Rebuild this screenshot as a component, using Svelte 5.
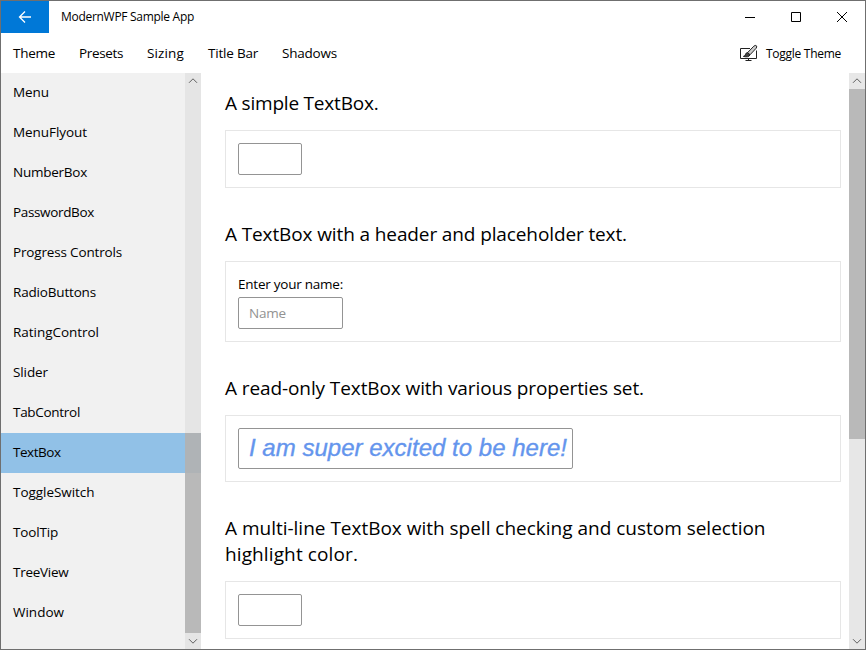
<script>
  const menus = [
    { label: 'Theme', width: 42 },
    { label: 'Presets', width: 44 },
    { label: 'Sizing', width: 37 },
    { label: 'Title Bar', width: 50 },
    { label: 'Shadows', width: 55 }
  ];
  const pages = [
    { label: 'Menu', width: 36 },
    { label: 'MenuFlyout', width: 74 },
    { label: 'NumberBox', width: 74 },
    { label: 'PasswordBox', width: 81 },
    { label: 'Progress Controls', width: 109 },
    { label: 'RadioButtons', width: 83 },
    { label: 'RatingControl', width: 86 },
    { label: 'Slider', width: 35 },
    { label: 'TabControl', width: 67 },
    { label: 'TextBox', width: 47.5 },
    { label: 'ToggleSwitch', width: 81.5 },
    { label: 'ToolTip', width: 45 },
    { label: 'TreeView', width: 55.5 },
    { label: 'Window', width: 51 }
  ];
  let selected = $state('TextBox');

  function fit(node, width) {
    const natural = node.getBoundingClientRect().width;
    node.style.letterSpacing = `${(width - natural) / node.textContent.length}px`;
  }
</script>

{#snippet chevron(down)}
  <svg class="chevron" width="16" height="16" viewBox="0 0 16 16">
    <path d={down ? 'M4 6.2 8 10.2 12 6.2' : 'M4 9.8 8 5.8 12 9.8'} />
  </svg>
{/snippet}

<div class="window">
  <header class="titlebar">
    <button class="back" aria-label="Back">
      <svg width="14" height="14" viewBox="0 0 14 14"><path d="M13 7H1.5M7 1.5 1.5 7 7 12.5" /></svg>
    </button>
    <span class="title"><span use:fit={133}>ModernWPF Sample App</span></span>
    <div class="captions">
      <button aria-label="Minimize"><svg width="12" height="12" viewBox="0 0 12 12"><path d="M1 6.5H11" /></svg></button>
      <button aria-label="Maximize"><svg width="12" height="12" viewBox="0 0 12 12"><path d="M1.5 1.5H10.5V10.5H1.5Z" /></svg></button>
      <button aria-label="Close"><svg width="12" height="12" viewBox="0 0 12 12"><path d="M1 1 11 11M11 1 1 11" /></svg></button>
    </div>
  </header>

  <nav class="menubar">
    {#each menus as menu}
      <span class="label" use:fit={menu.width}>{menu.label}</span>
    {/each}
    <button class="toggle">
      <svg width="18" height="16" viewBox="0 0 18 16">
        <path d="M10 3.5H.5V13.5H16.5V5.5M8.5 13.5V15.5M5.5 15.5H11.5" />
        <path class="handle" d="M7.6 7.6 13.8 1.2Q15.4-.2 16.4.8Q17.3 1.8 16 3.4L10 9.8Z" />
        <path class="bristle" d="M7.6 7.6Q5.6 7.8 5.3 9.8Q5 11.2 3.4 11.4Q8.8 12.8 10 9.8Z" />
      </svg>
      <span class="small" use:fit={75}>Toggle Theme</span>
    </button>
  </nav>

  <div class="body">
    <aside>
      <ul>
        {#each pages as page}
          <li>
            <button class:selected={page.label === selected} onclick={() => (selected = page.label)}>
              <span use:fit={page.width}>{page.label}</span>
            </button>
          </li>
        {/each}
      </ul>
      <div class="scrollbar side">
        {@render chevron(false)}
        <div class="track"><div class="thumb low"><div class="tint"></div></div></div>
        {@render chevron(true)}
      </div>
    </aside>

    <main>
      <section>
        <h2><span use:fit={153.5}>A simple TextBox.</span></h2>
        <div class="card"><div class="box"></div></div>
      </section>
      <section>
        <h2><span use:fit={402}>A TextBox with a header and placeholder text.</span></h2>
        <div class="card">
          <label for="name"><span use:fit={105}>Enter your name:</span></label>
          <div class="box name" id="name"><span use:fit={37}>Name</span></div>
        </div>
      </section>
      <section>
        <h2><span use:fit={419}>A read-only TextBox with various properties set.</span></h2>
        <div class="card"><div class="box excited"><span use:fit={318}>I am super excited to be here!</span></div></div>
      </section>
      <section>
        <h2>
          <span use:fit={540.5}>A multi-line TextBox with spell checking and custom selection</span><br />
          <span use:fit={133}>highlight color.</span>
        </h2>
        <div class="card"><div class="box"></div></div>
      </section>
    </main>
    <div class="scrollbar">
      {@render chevron(false)}
      <div class="track"><div class="thumb high"></div></div>
      {@render chevron(true)}
    </div>
  </div>
</div>

<style>
  :global(body) { margin: 0; overflow: hidden; }
  .window {
    box-sizing: border-box; width: 866px; height: 650px; border: 1px solid #6f6f6f;
    background: #fff; color: #000; display: flex; flex-direction: column; overflow: hidden;
    font: 14px/20px "Open Sans", "Noto Sans", sans-serif; white-space: nowrap;
  }
  button { font: inherit; color: inherit; border: 0; margin: 0; padding: 0; background: none; }
  svg { display: block; fill: none; stroke: #000; flex: none; }
  .titlebar { height: 32px; display: flex; align-items: center; flex: none; }
  .back { width: 48px; height: 32px; background: #0078d7; display: grid; place-items: center; }
  .back svg { stroke: #fff; stroke-width: 1.3; }
  .title { margin-left: 12px; font-size: 12px; }
  .captions { margin-left: auto; display: flex; }
  .captions button { width: 46px; height: 32px; display: grid; place-items: center; }
  .menubar { height: 40px; flex: none; display: flex; align-items: center; gap: 24px; padding: 0 24px 0 12px; font-size: 13.5px; }
  .toggle { margin-left: auto; display: flex; align-items: center; gap: 8px; }
  .toggle svg { stroke: #222; overflow: visible; }
  .small { font-size: 12px; line-height: 20px; padding-top: 1px; }
  .toggle .handle { fill: #ccc; }
  .toggle .bristle { fill: #444; }
  .body { flex: 1; min-height: 0; display: flex; }
  aside { width: 200px; display: flex; background: #f1f1f1; }
  ul { flex: 1; list-style: none; margin: 0; padding: 0; }
  li button { width: 100%; height: 40px; display: flex; align-items: center; padding: 0 0 2px 12px; font-size: 13.5px; }
  li .selected { background: #91c1e7; }
  .scrollbar { width: 16px; flex: none; display: flex; flex-direction: column; background: #e7e7e7; }
  .side { background: #e5e5e5; }
  .chevron { stroke: #606060; stroke-width: 1; }
  .track { flex: 1; display: flex; flex-direction: column; }
  .thumb { background: #b9b9b9; }
  .high { height: 350px; }
  .low { height: 200px; margin-top: auto; }
  .tint { height: 40px; background: #afb3b6; }
  main { flex: 1; min-width: 0; padding: 17px 8px 0 24px; overflow: hidden; }
  section { margin-bottom: 33px; }
  h2 { margin: 0 0 14px; font-size: 19px; line-height: 26px; font-weight: 400; }
  .card { border: 1px solid #e6e6e6; padding: 12px; }
  .box { box-sizing: border-box; width: 64px; height: 32px; border: 1px solid #949494; border-radius: 2px; }
  label { display: block; height: 19px; line-height: 21px; margin-bottom: 4px; font-size: 13.5px; }
  .name { width: 105px; padding-left: 10px; line-height: 30px; color: #929292; font-size: 13.5px; }
  .excited {
    width: 335px; height: 41px; padding-left: 10px; color: #6495ed;
    font: italic 24px/38px "Liberation Sans", Arial, sans-serif; -webkit-text-stroke: 0.35px #6495ed;
  }
</style>
